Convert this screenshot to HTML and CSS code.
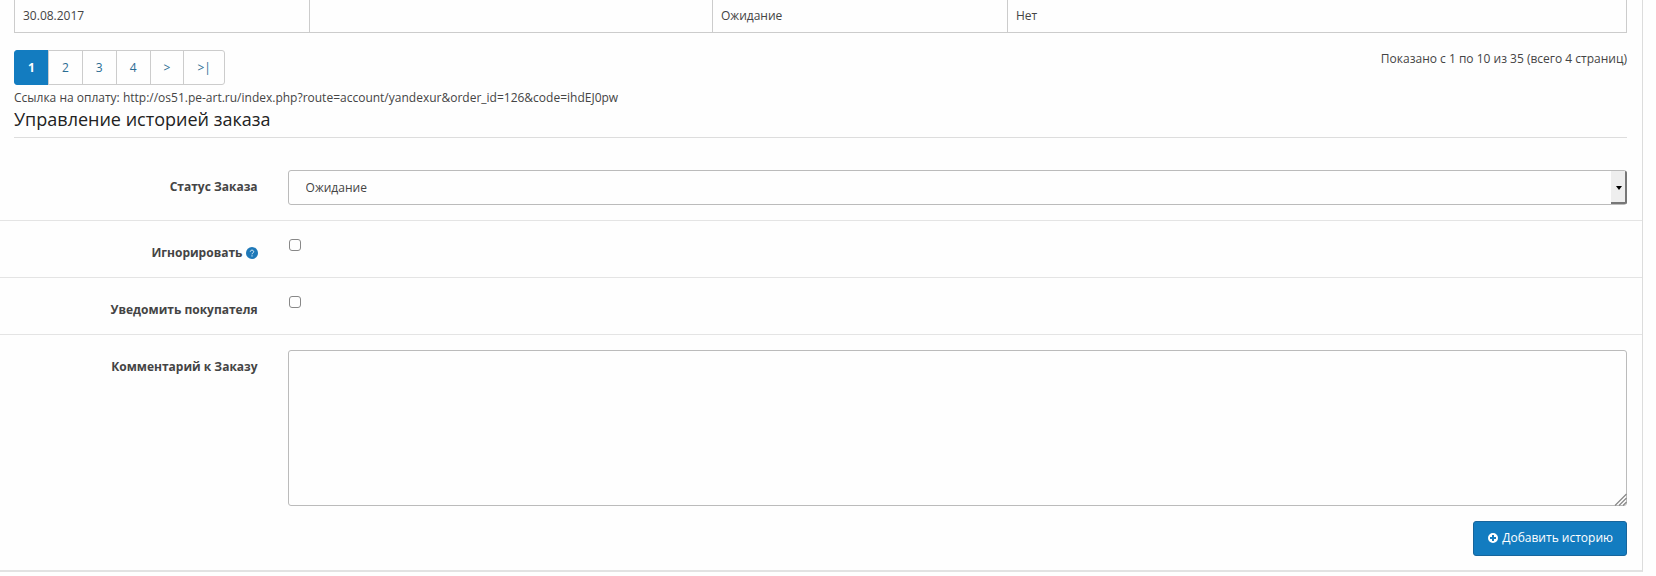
FILE: index.html
```html
<!DOCTYPE html>
<html lang="ru">
<head>
  <meta charset="UTF-8">
  <meta name="viewport" content="width=device-width, initial-scale=1.0">
  <title>История заказа</title>
  <link rel="stylesheet" href="styles.css">
</head>
<body>
  <div class="panel">
    <div class="panel-body">
      <table class="table">
        <colgroup>
          <col class="col-date">
          <col class="col-comment">
          <col class="col-status">
          <col class="col-notify">
        </colgroup>
        <tbody>
          <tr>
            <td>30.08.2017</td>
            <td></td>
            <td>Ожидание</td>
            <td>Нет</td>
          </tr>
        </tbody>
      </table>

      <div class="pager">
        <ul class="pagination">
          <li class="active"><span>1</span></li>
          <li><a href="#">2</a></li>
          <li><a href="#">3</a></li>
          <li><a href="#">4</a></li>
          <li><a href="#">&gt;</a></li>
          <li><a href="#">&gt;|</a></li>
        </ul>
        <div class="results">Показано с 1 по 10 из 35 (всего 4 страниц)</div>
      </div>

      <div class="pay-link">Ссылка на оплату: http://os51.pe-art.ru/index.php?route=account/yandexur&amp;order_id=126&amp;code=ihdEJ0pw</div>

      <form>
        <fieldset>
          <legend>Управление историей заказа</legend>
          <div class="form-group">
            <label class="control-label" for="input-status">Статус Заказа</label>
            <div class="control">
              <div class="select-wrap">
                <select id="input-status" class="form-control">
                  <option selected>Ожидание</option>
                </select>
              </div>
            </div>
          </div>
          <div class="form-group">
            <label class="control-label" for="input-override">Игнорировать
              <svg class="icon help" viewBox="0 0 12 12"><circle cx="6" cy="6" r="6" fill="#1e78b8"/><path d="M4.3 4.7C4.3 2.7 7.7 2.7 7.7 4.7C7.7 5.9 6 5.9 6 7.3M6 8.3V9.5" fill="none" stroke="#e4f4fc" stroke-width="1"/></svg>
            </label>
            <div class="control">
              <input type="checkbox" id="input-override">
            </div>
          </div>
          <div class="form-group">
            <label class="control-label" for="input-notify">Уведомить покупателя</label>
            <div class="control">
              <input type="checkbox" id="input-notify">
            </div>
          </div>
          <div class="form-group">
            <label class="control-label" for="input-comment">Комментарий к Заказу</label>
            <div class="control">
              <div class="textarea-wrap">
                <textarea id="input-comment" class="form-control"></textarea>
                <svg class="grip" viewBox="0 0 13 13"><path d="M1 12.5L12.5 1M5 12.5L12.5 5M9 12.5L12.5 9" fill="none" stroke="#888" stroke-width="1.2"/></svg>
              </div>
            </div>
          </div>
        </fieldset>
        <div class="buttons">
          <button type="button" class="btn">
            <svg class="icon" viewBox="0 0 12 12"><path fill-rule="evenodd" d="M6 1a5 5 0 1 0 0 10A5 5 0 1 0 6 1ZM5 3h2v2h2v2H7v2H5V7H3V5h2Z" fill="#fff"/></svg>
            Добавить историю
          </button>
        </div>
      </form>
    </div>
  </div>
</body>
</html>
```

FILE: styles.css
```css
*,
*::before,
*::after {
  box-sizing: border-box;
}

body {
  margin: 0;
  background-color: #fefefe;
  color: #444;
  font-family: "Open Sans", "Noto Sans", sans-serif;
  font-size: 12px;
  line-height: 18px;
}

.panel {
  margin-right: 13px;
  border-right: 1px solid #dcdcdc;
  border-bottom: 2px solid #e2e2e2;
}

.panel-body {
  padding: 0 15px 14px 14px;
}

/* История */
.table {
  width: 100%;
  margin-bottom: 17px;
  border-collapse: collapse;
  table-layout: fixed;
}

.table td {
  height: 32px;
  padding: 7px 8px 6px;
  border: 1px solid #ccc;
  border-top: none;
}

.col-date,
.col-status {
  width: 18.3%;
}

.col-comment {
  width: 25%;
}

.pager {
  display: flex;
  justify-content: space-between;
}

.pagination {
  display: flex;
  margin: 0;
  padding: 0;
  list-style: none;
}

.pagination a,
.pagination span {
  display: block;
  height: 35px;
  margin-left: -1px;
  padding: 8px 13px;
  border: 1px solid #ccc;
  color: #2a6c93;
  text-decoration: none;
}

.pagination .active span {
  margin-left: 0;
  border-color: #137cc0;
  border-radius: 3px 0 0 3px;
  background-color: #137cc0;
  color: #fff;
  font-weight: bold;
}

.pagination li:last-child a {
  border-radius: 0 3px 3px 0;
}

.pay-link {
  margin-top: 4px;
}

/* Форма */
fieldset {
  min-width: 0;
  margin: 0;
  padding: 0;
  border: none;
}

legend {
  width: 100%;
  margin-bottom: 17px;
  padding: 0 0 6px;
  border-bottom: 1px solid #ddd;
  color: #222;
  font-size: 18px;
  line-height: 24px;
}

.form-group {
  display: flex;
  margin: 0 -15px 0 -14px;
  padding: 15px 0;
}

.form-group + .form-group {
  border-top: 1px solid #e4e4e4;
}

.control-label {
  width: 16.6%;
  padding: 8px 15px 0 0;
  font-weight: bold;
  text-align: right;
}

.control {
  flex: 1;
  padding: 0 15px;
}

.form-control {
  display: block;
  width: 100%;
  height: 35px;
  padding: 8px 17px;
  border: 1px solid #bbb;
  border-radius: 3px;
  background-color: #fefefe;
  color: #444;
  font: inherit;
  appearance: none;
}

textarea.form-control {
  height: 156px;
  resize: none;
}

.select-wrap,
.textarea-wrap {
  position: relative;
}

.select-wrap::before {
  content: "";
  position: absolute;
  top: 1px;
  right: 0;
  width: 16px;
  height: 33px;
  border-right: 2px solid #777;
  border-bottom: 2px solid #777;
  border-radius: 0 2px 2px 0;
  background-color: #eee;
  pointer-events: none;
}

.select-wrap::after {
  content: "";
  position: absolute;
  top: 16px;
  right: 5px;
  border: 3px solid transparent;
  border-top: 4px solid #000;
  border-bottom: none;
  pointer-events: none;
}

.grip {
  position: absolute;
  right: 0;
  bottom: 0;
  width: 13px;
  height: 13px;
}

input[type="checkbox"] {
  display: block;
  width: 12px;
  height: 12px;
  margin: 3px 0 0 1px;
  border: 1px solid #888;
  border-radius: 3px;
  background-color: #fefefe;
  appearance: none;
}

input[type="checkbox"]:checked {
  background-color: #137cc0;
}

.icon {
  width: 12px;
  height: 12px;
  vertical-align: -2px;
}

.buttons {
  display: flex;
  justify-content: flex-end;
}

.btn {
  height: 35px;
  padding: 0 13px;
  border: 1px solid #17659c;
  border-radius: 3px;
  background-color: #137cc0;
  color: #fff;
  font: inherit;
  font-weight: 500;
  cursor: pointer;
}
```
